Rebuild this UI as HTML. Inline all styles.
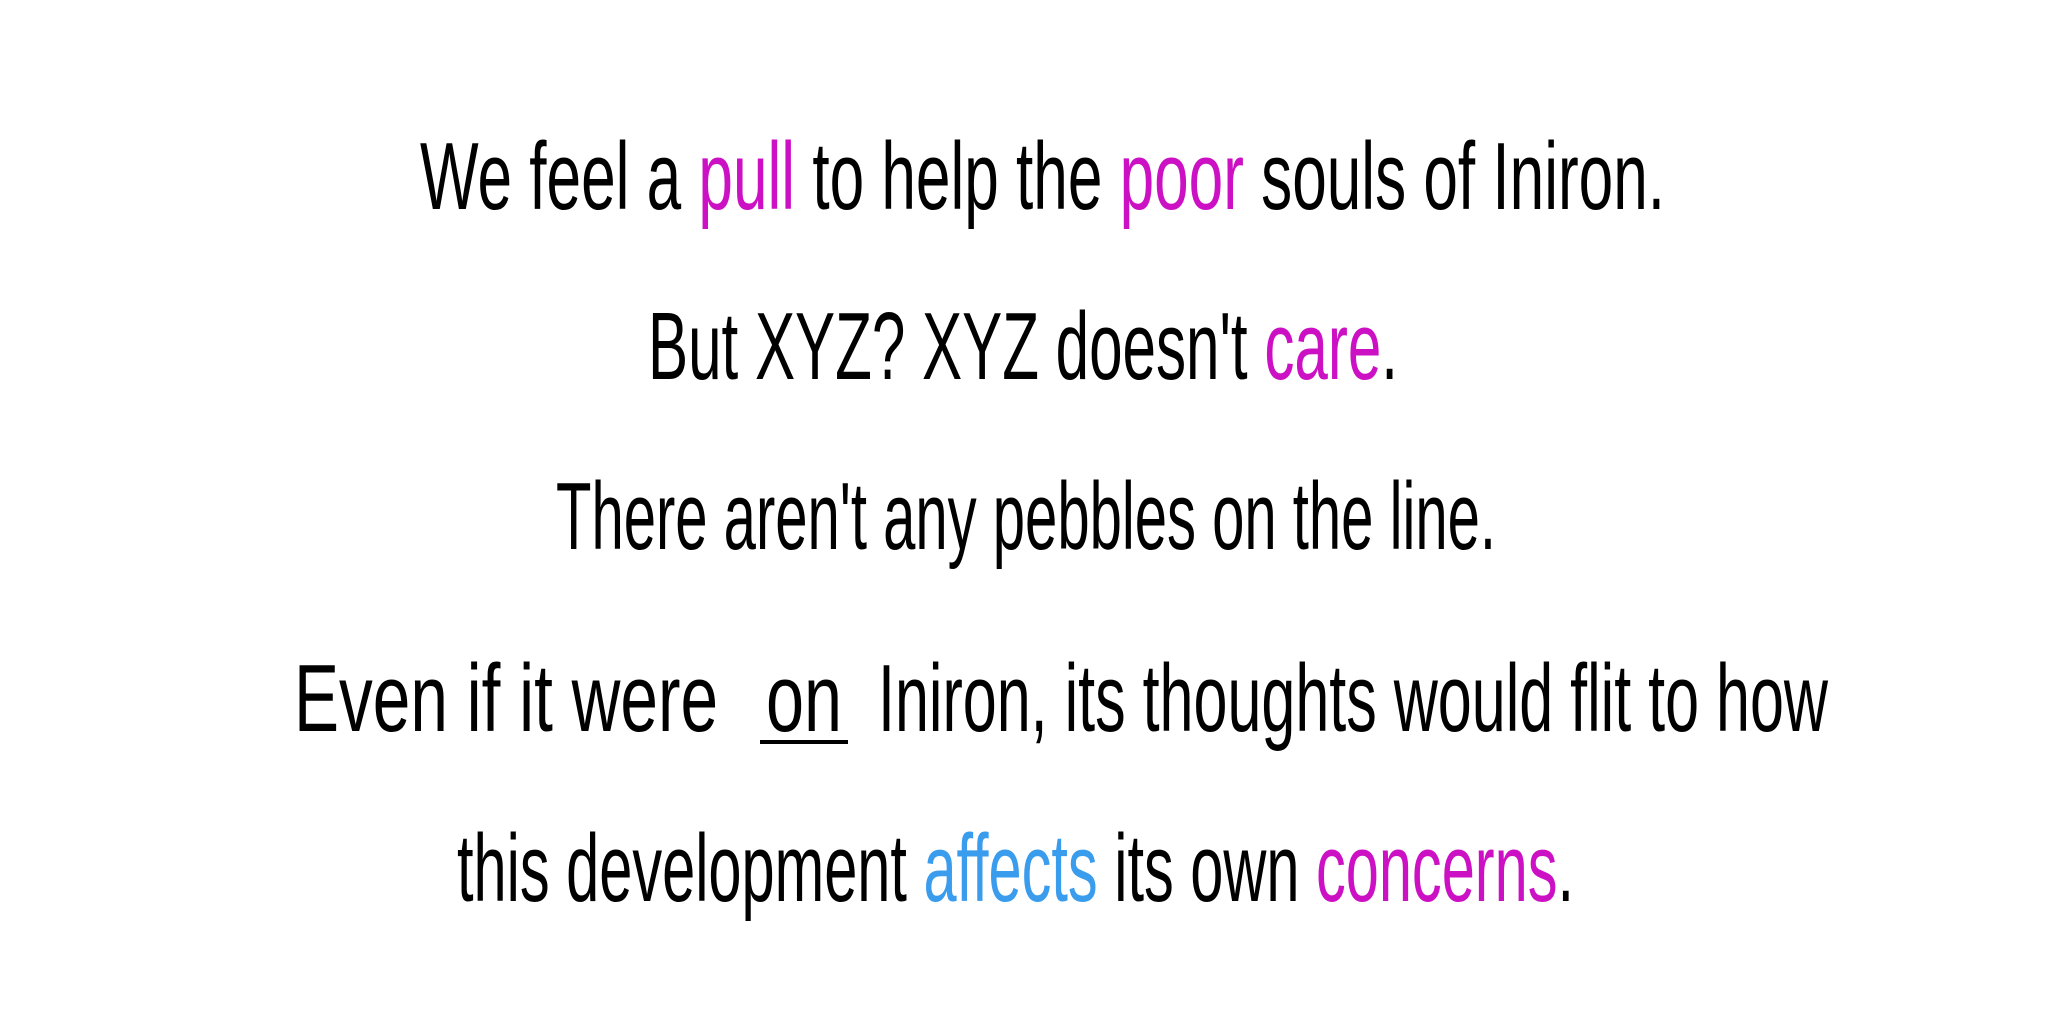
<!DOCTYPE html>
<html><head><meta charset="utf-8"><style>
html,body{margin:0;padding:0;background:#fff;width:2048px;height:1014px;overflow:hidden}
svg{display:block}
text{font-family:"Liberation Sans Narrow","Liberation Sans",sans-serif;font-size:96px;fill:#000}
.m{fill:#cc11c4}.b{fill:#3a9cec}
</style></head><body>
<svg width="2048" height="1014" viewBox="0 0 2048 1014" xmlns="http://www.w3.org/2000/svg">
<text x="420" y="209" textLength="1245" lengthAdjust="spacingAndGlyphs">We feel a <tspan class="m">pull</tspan> to help the <tspan class="m">poor</tspan> souls of Iniron.</text>
<text x="648" y="379" textLength="750" lengthAdjust="spacingAndGlyphs">But XYZ? XYZ  doesn't <tspan class="m">care</tspan>.</text>
<text x="556" y="549" textLength="940" lengthAdjust="spacingAndGlyphs">There aren't any pebbles on the line.</text>
<text x="294" y="731" textLength="424" lengthAdjust="spacingAndGlyphs">Even if it were</text>
<text x="766" y="731" textLength="76" lengthAdjust="spacingAndGlyphs">on</text>
<text x="878" y="731" textLength="950" lengthAdjust="spacingAndGlyphs">Iniron, its thoughts would flit to how</text>
<line x1="760" y1="742" x2="848" y2="742" stroke="#000" stroke-width="4"/>
<text x="457" y="901" textLength="1117" lengthAdjust="spacingAndGlyphs">this development <tspan class="b">affects</tspan> its own <tspan class="m">concerns</tspan>.</text>
</svg>
</body></html>
